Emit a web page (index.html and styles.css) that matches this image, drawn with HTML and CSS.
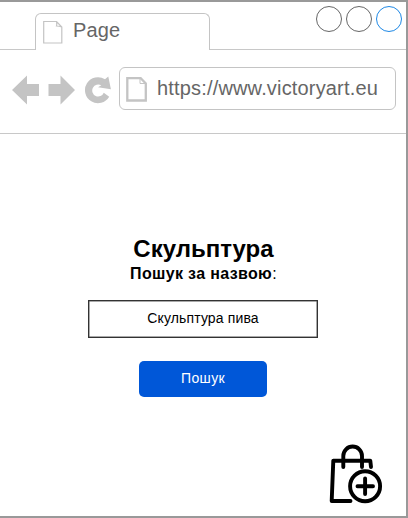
FILE: index.html
```html
<!DOCTYPE html>
<html lang="uk">
<head>
<meta charset="utf-8">
<title>Page</title>
<link rel="stylesheet" href="styles.css">
</head>
<body>
<div class="window">
  <header class="tabs">
    <div class="edge"></div>
    <div class="tab">
      <svg class="tab-icon" width="20" height="24" viewBox="0 0 20 24"><path d="M.7 .5H13.5L18.8 6V22H.7ZM13.5 .5Q14 3.500 13.5 5Q16 5 18.8 6"/></svg>
      <span>Page</span>
    </div>
    <div class="controls">
      <i class="dot"></i><i class="dot"></i><i class="dot active"></i>
    </div>
  </header>
  <nav class="toolbar">
    <svg class="nav" width="100" height="30" viewBox="0 0 100 30">
      <path d="M0 15 15 .5V9H27V21H15V29.5Z"/>
      <path d="M63 15 48.500 .5V9H36.500V21H48.500V29.500Z"/>
      <path d="M96.300 1.500 98.900 14.300 86 12.300 89.300 10.300A6 6 0 1 0 91.800 17.700L97.200 21.800A13 13 0 1 1 93 4.300Z"/>
    </svg>
    <div class="address">
      <svg class="page-icon" width="21" height="25" viewBox="0 0 21 25"><path d="M1.300 1H14.500L19.800 6.500V23.500H1.300Z"/><path class="fold" d="M14 2V6.500H19"/></svg>
      <span>https://www.victoryart.eu</span>
    </div>
  </nav>
  <main class="content">
    <h1>Скульптура</h1>
    <p class="label"><b>Пошук за назвою</b>:</p>
    <div class="field">Скульптура пива</div>
    <button class="search">Пошук</button>
  </main>
  <svg class="bag" width="54" height="61" viewBox="0 0 54 61">
    <path d="M21.500 57H2.700L4.300 16.700H41.300L42 23M14.300 23V11.900A9.350 9.350 0 0 1 33 11.900V23"/>
    <circle cx="36.100" cy="42.300" r="15"/>
    <path d="M28.500 42.300H44M36.100 34.500V50"/>
  </svg>
</div>
</body>
</html>
```
FILE: styles.css
```css
* { box-sizing: border-box; }
body { margin: 0; background: #fff; font-family: "Liberation Sans", Arial, sans-serif; }
.window { position: relative; width: 408px; height: 518px; overflow: hidden; border: solid #999; border-width: 2px 2px 2px 0; }
.tabs { display: flex; height: 48px; }
.edge { width: 35px; border-bottom: 1px solid #c8c8c8; }
.tab { display: flex; width: 175px; height: 37px; margin-top: 11px; padding: 7px 0 0 7px; border: 1px solid #c4c4c4; border-bottom: 0; border-radius: 6px 6px 0 0; color: #666; font-size: 20px; line-height: 20px; }
.tab-icon { margin-right: 10px; fill: none; stroke: #c4c4c4; stroke-width: 1.2; }
.tab span { margin-top: -1px; letter-spacing: .15px; }
.controls { display: flex; flex: 1; justify-content: flex-end; gap: 4px; padding: 4px 4px 0 0; border-bottom: 1px solid #c8c8c8; }
.dot { width: 26px; height: 26px; border: 1.4px solid #666; border-radius: 50%; }
.active { border-color: #1e88e5; }
.toolbar { display: flex; height: 84px; padding: 17px 0 0 12px; border-bottom: 1px solid #c8c8c8; }
.nav { margin-top: 8px; fill: #c4c4c4; }
.address { display: flex; width: 277px; height: 43px; margin-left: 7px; padding: 9px 0 0 6px; border: 1px solid #c4c4c4; border-radius: 6px; color: #666; font-size: 20px; line-height: 22px; letter-spacing: .17px; }
.page-icon { margin-right: 10px; fill: none; stroke: #c4c4c4; stroke-width: 2.3; }
.fold { stroke-width: 1; }
.content { display: flex; flex-direction: column; align-items: center; margin-top: 101px; color: #000; }
h1 { margin: 0 0 0 1px; font-size: 24px; line-height: 28px; }
.label { margin: 1px 0 0 1px; font-size: 16px; line-height: 20px; letter-spacing: .35px; }
.field { display: flex; align-items: center; justify-content: center; width: 230px; height: 38px; margin-top: 16px; padding-bottom: 2px; border: 1px solid #333; box-shadow: inset 0 0 0 .5px #555; font-size: 14px; letter-spacing: .14px; }
.search { width: 128px; height: 36px; margin-top: 23px; padding: 0 0 2px; border: 0; border-radius: 5px; background: #0057d8; color: #fff; font: 14px "Liberation Sans", Arial, sans-serif; letter-spacing: .35px; }
.bag { position: absolute; left: 329px; top: 442px; fill: none; stroke: #000; stroke-width: 3.900; stroke-linecap: round; stroke-linejoin: round; }
```
